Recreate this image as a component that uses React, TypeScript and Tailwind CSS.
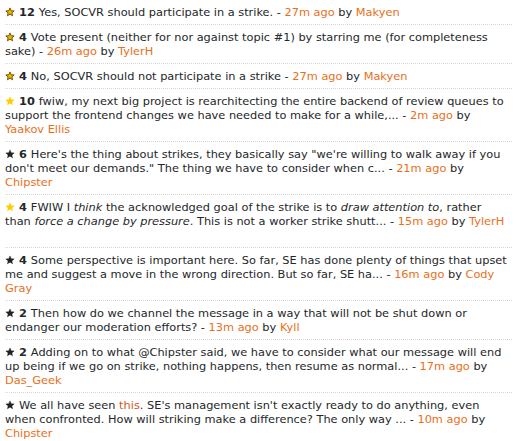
import React from "react";

type Item = {
  star: "owner" | "yellow" | "black";
  count?: string;
  body: React.ReactNode;
  time: string;
  user: string;
  extra?: boolean;
};

function Star({ kind }: { kind: "owner" | "yellow" | "black" }) {
  const fill = kind === "owner" ? "#e8b400" : kind === "yellow" ? "#ffcc00" : "#222222";
  const stroke = kind === "owner" ? "#6b4a00" : fill;
  return (
    <svg width="10" height="10" viewBox="0 0 24 24" className="inline-block align-[-1px] mr-[4px]">
      <path
        d="M12 2.2l2.9 6.6 7.1.6-5.4 4.7 1.6 7-6.2-3.7-6.2 3.7 1.6-7L2 9.4l7.1-.6z"
        fill={fill}
        stroke={stroke}
        strokeWidth={kind === "owner" ? 2.2 : 1}
        strokeLinejoin="round"
      />
    </svg>
  );
}

const items: Item[] = [
  { star: "owner", count: "12", body: "Yes, SOCVR should participate in a strike.", time: "27m ago", user: "Makyen" },
  {
    star: "owner",
    count: "4",
    body: "Vote present (neither for nor against topic #1) by starring me (for completeness sake)",
    time: "26m ago",
    user: "TylerH",
  },
  { star: "owner", count: "4", body: "No, SOCVR should not participate in a strike", time: "27m ago", user: "Makyen" },
  {
    star: "yellow",
    count: "10",
    body: "fwiw, my next big project is rearchitecting the entire backend of review queues to support the frontend changes we have needed to make for a while,...",
    time: "2m ago",
    user: "Yaakov Ellis",
  },
  {
    star: "black",
    count: "6",
    body: "Here's the thing about strikes, they basically say \"we're willing to walk away if you don't meet our demands.\" The thing we have to consider when c...",
    time: "21m ago",
    user: "Chipster",
  },
  {
    star: "yellow",
    count: "4",
    body: (
      <>
        FWIW I <i>think</i> the acknowledged goal of the strike is to <i>draw attention to</i>, rather
        <br />
        than <i>force a change by pressure</i>. This is not a worker strike shutt...
      </>
    ),
    time: "15m ago",
    user: "TylerH",
    extra: true,
  },
  {
    star: "black",
    count: "4",
    body: "Some perspective is important here. So far, SE has done plenty of things that upset me and suggest a move in the wrong direction. But so far, SE ha...",
    time: "16m ago",
    user: "Cody Gray",
  },
  {
    star: "black",
    count: "2",
    body: "Then how do we channel the message in a way that will not be shut down or endanger our moderation efforts?",
    time: "13m ago",
    user: "Kyll",
  },
  {
    star: "black",
    count: "2",
    body: "Adding on to what @Chipster said, we have to consider what our message will end up being if we go on strike, nothing happens, then resume as normal...",
    time: "17m ago",
    user: "Das_Geek",
  },
  {
    star: "black",
    body: (
      <>
        We all have seen <span className="text-[#d2571c]">this</span>. SE's management isn't exactly ready to do
        anything, even when confronted. How will striking make a difference? The only way ...
      </>
    ),
    time: "10m ago",
    user: "Chipster",
  },
];

export default function App() {
  return (
    <div
      className="w-[518px] h-[441px] overflow-hidden bg-white pl-[5px] pr-[6px] text-[11.35px] leading-[14px] text-[#242729]"
      style={{ fontFamily: '"DejaVu Sans", Verdana, sans-serif' }}
    >
      {items.map((it, i) => (
        <div key={i} className="py-[5px] border-b border-dotted border-[#d6d6d6]">
          <Star kind={it.star} />
          {it.count && <b>{it.count} </b>}
          {it.body} - <span className="text-[#e8701a]">{it.time}</span> by{" "}
          <span className="text-[#e8701a]">{it.user}</span>
          {it.extra && <div className="h-[14px]" />}
        </div>
      ))}
    </div>
  );
}
